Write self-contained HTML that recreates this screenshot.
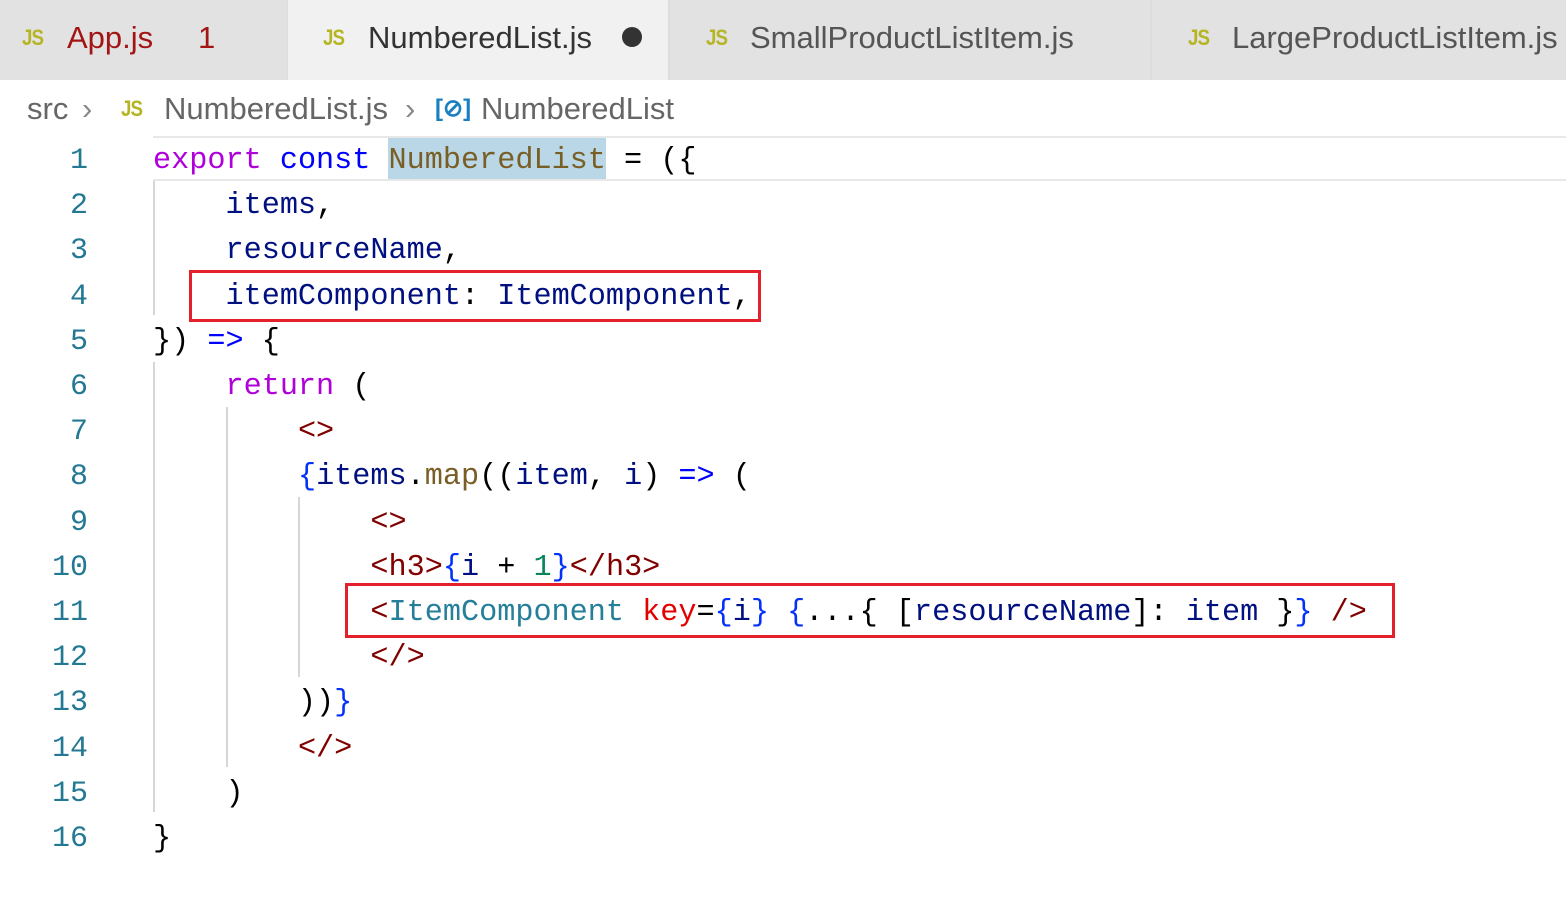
<!DOCTYPE html>
<html><head><meta charset="utf-8"><style>
*{margin:0;padding:0;box-sizing:border-box}
body{width:1566px;height:899px;overflow:hidden;background:#fff;position:relative;font-family:"Liberation Sans",sans-serif}
.tabs{position:absolute;left:0;top:0;width:1566px;height:80px;background:#dddddd}
.tab{position:absolute;top:0;height:80px;background:#e2e2e2;font-size:31px;line-height:76px;color:#555;white-space:nowrap;letter-spacing:0}
.js{position:absolute;color:#b5b524;font-weight:bold;font-size:22px;letter-spacing:-1px;transform:scaleX(0.85);transform-origin:left}
.crumb{position:absolute;top:88px;font-size:31px;color:#666;line-height:42px;white-space:nowrap}
.code{position:absolute;font-family:"Liberation Mono",monospace;font-size:30.2px;line-height:45.2px;white-space:pre;color:#000}
.ln{position:absolute;left:0;width:88px;text-align:right;font-family:"Liberation Mono",monospace;font-size:30px;color:#237893;line-height:45.2px}
.g{position:absolute;width:2px;background:#d6d6d6}
.k{color:#af00db}.b{color:#0000ff}.f{color:#795e26}.v{color:#001080}.t{color:#800000}.c{color:#267f99}.a{color:#e50000}.n{color:#098658}.br{color:#0431fa}
.box{position:absolute;border:3px solid #e3202c}
</style></head><body>
<div class="tabs">
 <div class="tab" style="left:0;width:287px"><span class="js" style="left:22px;top:0">JS</span><span style="position:absolute;left:67px;color:#a31515">App.js</span><span style="position:absolute;left:198px;color:#a31515">1</span></div>
 <div class="tab" style="left:288px;width:380px;background:#f1f1f1;color:#333"><span class="js" style="left:35px">JS</span><span style="position:absolute;left:80px">NumberedList.js</span><span style="position:absolute;left:334px;top:27px;width:20px;height:20px;border-radius:50%;background:#333"></span></div>
 <div class="tab" style="left:670px;width:480px"><span class="js" style="left:36px">JS</span><span style="position:absolute;left:80px">SmallProductListItem.js</span></div>
 <div class="tab" style="left:1152px;width:414px"><span class="js" style="left:36px">JS</span><span style="position:absolute;left:80px">LargeProductListItem.js</span></div>
</div>
<div class="crumb" style="left:27px">src</div>
<div class="crumb" style="left:82px;color:#888">&#8250;</div>
<span class="js" style="left:121px;top:88px;line-height:42px">JS</span>
<div class="crumb" style="left:164px">NumberedList.js</div>
<div class="crumb" style="left:405px;color:#888">&#8250;</div>
<div class="crumb" style="left:435px;color:#1a7fc0;font-size:24px;font-weight:bold">[&#8856;]</div>
<div class="crumb" style="left:481px">NumberedList</div>
<div style="position:absolute;left:153px;top:136px;width:1413px;height:45px;border-top:2px solid #e8e8e8;border-bottom:2px solid #e8e8e8"></div>
<div style="position:absolute;left:388px;top:138px;width:218px;height:41px;background:#b9d7e6"></div>
<div class="g" style="left:153px;top:181px;height:134px"></div>
<div class="g" style="left:153px;top:362px;height:450px"></div>
<div class="g" style="left:226px;top:407px;height:360px"></div>
<div class="g" style="left:298px;top:497px;height:180px"></div>
<div class="ln" style="top:139px">1<br>2<br>3<br>4<br>5<br>6<br>7<br>8<br>9<br>10<br>11<br>12<br>13<br>14<br>15<br>16</div>
<div class="code" style="left:153px;top:139px"><span class="k">export</span> <span class="b">const</span> <span class="f">NumberedList</span> = ({
    <span class="v">items</span>,
    <span class="v">resourceName</span>,
    <span class="v">itemComponent</span>: <span class="v">ItemComponent</span>,
}) <span class="b">=&gt;</span> {
    <span class="k">return</span> (
        <span class="t">&lt;&gt;</span>
        <span class="br">{</span><span class="v">items</span>.<span class="f">map</span>((<span class="v">item</span>, <span class="v">i</span>) <span class="b">=&gt;</span> (
            <span class="t">&lt;&gt;</span>
            <span class="t">&lt;h3&gt;</span><span class="br">{</span><span class="v">i</span> + <span class="n">1</span><span class="br">}</span><span class="t">&lt;/h3&gt;</span>
            <span class="t">&lt;</span><span class="c">ItemComponent</span> <span class="a">key</span>=<span class="br">{</span><span class="v">i</span><span class="br">}</span> <span class="br">{</span>...{ [<span class="v">resourceName</span>]: <span class="v">item</span> }<span class="br">}</span> <span class="t">/&gt;</span>
            <span class="t">&lt;/&gt;</span>
        ))<span class="br">}</span>
        <span class="t">&lt;/&gt;</span>
    )
}</div>
<div class="box" style="left:189px;top:270px;width:572px;height:52px"></div>
<div class="box" style="left:345px;top:583px;width:1050px;height:55px"></div>
</body></html>
